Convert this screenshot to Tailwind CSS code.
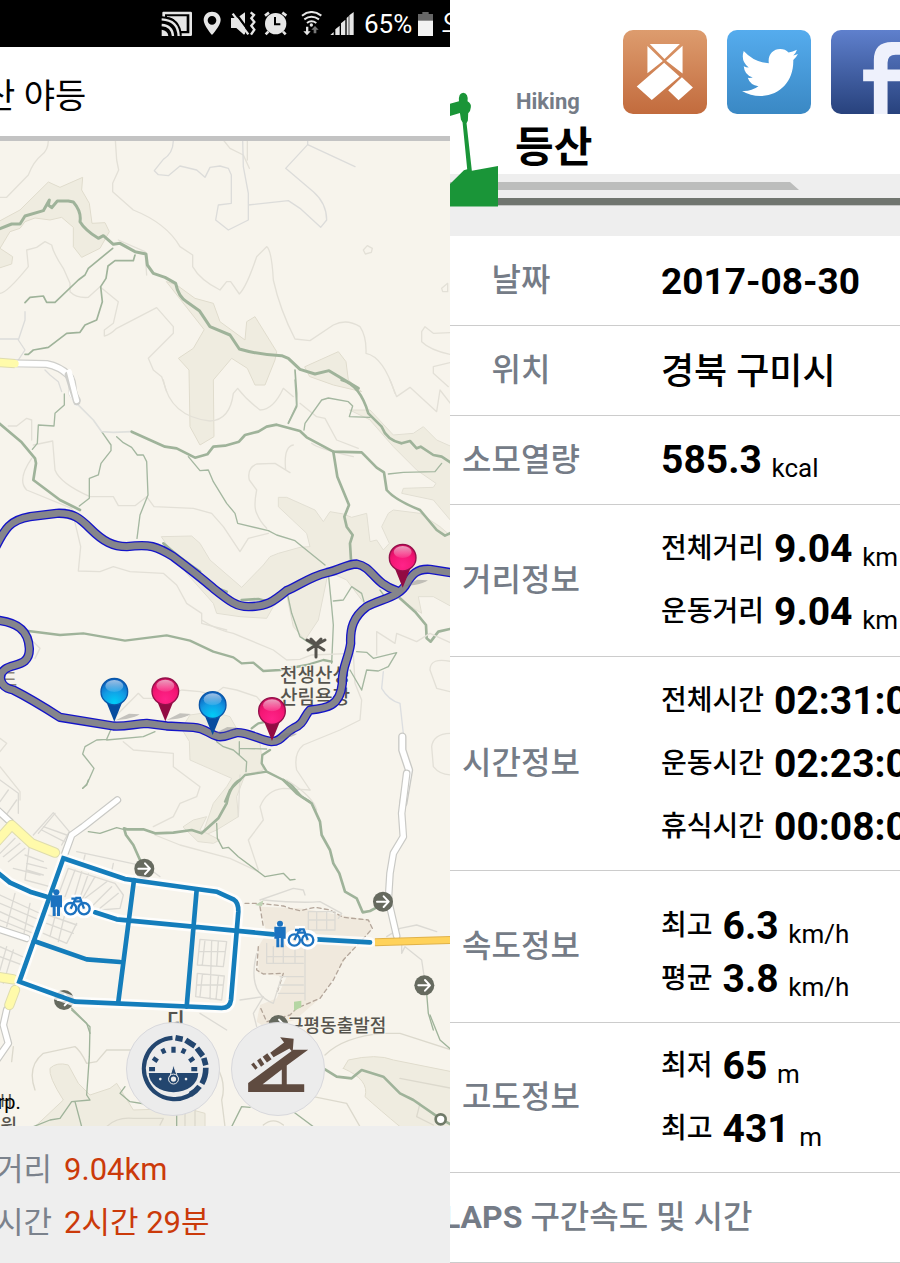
<!DOCTYPE html>
<html lang="ko">
<head>
    <meta charset="UTF-8">
    <meta name="viewport" content="width=device-width, initial-scale=1.0">
    <title>산 야등 - 등산 기록</title>
    <script src="https://cdn.jsdelivr.net/npm/@tailwindcss/browser@4"></script>
</head>
<body class="bg-white text-black font-[Roboto,'Noto_Sans_CJK_KR',sans-serif]">
<div class="grid grid-cols-2 min-h-screen">

    <!-- 지도 화면 -->
    <section class="flex flex-col overflow-hidden">
        <div class="flex items-center h-[47px] bg-black text-white pl-[161px] whitespace-nowrap overflow-hidden">
            <svg class="w-[194px] h-[26px] shrink-0" viewBox="484 32 582 78" fill="#e6e6e6">
                <!-- 캐스트 -->
                <path d="M488 50V37q0-3 3-3h82q4 0 4 4v65q0 4-4 4h-33v-8h29V42h-73v8z"/>
                <path d="M502 48h59v44h-21q-4-38-38-42z"/>
                <g fill="none" stroke="#000" stroke-width="19"><path d="M486 57q49 2 51 50"/></g>
                <g fill="none" stroke="#e6e6e6" stroke-width="7"><path d="M486 57q49 2 51 50M486 74q32 2 34 33"/></g>
                <path d="M486 88q18 2 20 19h-20z"/>
                <!-- 위치 -->
                <path fill-rule="evenodd" d="M637 34c-14 0-25 10-25 25 0 17 25 45 25 45s26-28 26-45c0-15-12-25-26-25zm0 13a13 13 0 1 1 0 26 13 13 0 0 1 0-26z"/>
                <!-- 무음 진동 -->
                <path d="M694 53h18l24-17v64l-3 3-23-20h-16z"/>
                <path d="M706 36l46 62" stroke="#000" stroke-width="7"/>
                <path d="M699 40l47 62" stroke="#e6e6e6" stroke-width="7"/>
                <path d="M753 36l10 8-8 10 9 11-9 11 9 12-10 15" fill="none" stroke="#e6e6e6" stroke-width="7"/>
                <!-- 알람 -->
                <circle cx="828" cy="70" r="32"/>
                <path d="M796 46l12-9M860 46l-12-9M806 94l-8 8M850 94l8 8" stroke="#e6e6e6" stroke-width="8"/>
                <path d="M826 50v22h16" fill="none" stroke="#000" stroke-width="6"/>
                <!-- 와이파이 -->
                <g fill="none" stroke="#e6e6e6" stroke-width="6"><path d="M907 46q28-22 58 0M914 57q21-16 44 0M922 68q13-10 28 0"/></g>
                <circle cx="935" cy="74" r="5"/>
                <path d="M919 79h7v14h7l-11 12-11-12h8z"/>
                <path fill="#777" d="M942 99V88h-7l11-11 11 11h-7v11z"/>
                <!-- 신호 -->
                <path d="M992 104l10-9v9zM1007 87l13-11v28h-13zM1024 69l13-11v46h-13zM1041 53l6-6v57h-6zM1049 45l13-10v69h-13z"/>
            </svg>
            <span class="ml-[9px] text-[26px] leading-8">65%</span>
            <svg class="w-[15px] h-6 ml-[6px] shrink-0" viewBox="0 0 45 72"><path fill="#666" d="M13 0h19v6h13v22H0V6h13z"/><path fill="#f2f2f2" d="M0 26h45v46H0z"/></svg>
            <span class="ml-[8px] text-[26px] leading-8">오후</span>
        </div>

        <header class="flex items-center h-[94px] pt-2 bg-white border-b-[5px] border-[#c3c3c3] overflow-hidden">
            <h1 class="-ml-4 text-[34px] leading-10 whitespace-nowrap">산 야등</h1>
        </header>

        <div class="relative grow bg-[#f7f4ec] overflow-hidden">
            <svg class="w-full h-[985px]" viewBox="0 141 450 985" preserveAspectRatio="xMidYMin slice" fill="none" stroke-linejoin="round" stroke-linecap="round">
                <defs>
                    <radialGradient id="pinkBall" cx=".5" cy=".8" r=".8"><stop offset="0" stop-color="#ff2389"/><stop offset=".6" stop-color="#f41674"/><stop offset="1" stop-color="#c70c58"/></radialGradient>
                    <radialGradient id="blueBall" cx=".5" cy=".9" r=".85"><stop offset="0" stop-color="#00cdf7"/><stop offset=".55" stop-color="#139be4"/><stop offset="1" stop-color="#0a5fbd"/></radialGradient>
                    <linearGradient id="shine" x1="0" y1="0" x2="0" y2="1"><stop offset="0" stop-color="#fff" stop-opacity=".6"/><stop offset="1" stop-color="#fff" stop-opacity=".1"/></linearGradient>
                    <g id="pinPink">
                        <path d="M4-4l40-20 32 2q-10 8-40 14z" fill="#777" fill-opacity=".4"/>
                        <path d="M-26-64L0 0l26-64z" fill="#920b43"/>
                        <circle cy="-90" r="40" fill="url(#pinkBall)" stroke="#93104a" stroke-width="4"/>
                        <ellipse cy="-107" rx="27" ry="18" fill="url(#shine)"/>
                    </g>
                    <g id="pinBlue">
                        <path d="M4-4l40-20 32 2q-10 8-40 14z" fill="#777" fill-opacity=".4"/>
                        <path d="M-26-64L0 0l26-64z" fill="#064c9f"/>
                        <circle cy="-90" r="40" fill="url(#blueBall)" stroke="#0b57a8" stroke-width="4"/>
                        <ellipse cy="-107" rx="27" ry="18" fill="url(#shine)"/>
                    </g>
                    <g id="gate"><circle r="30" fill="#666a5f"/><path d="M-18 0h34M2-16l15 16L2 16" stroke="#fff" stroke-width="6"/></g>
                    <g id="bike" stroke-linejoin="miter" stroke-linecap="butt">
                        <g stroke="#fff" stroke-width="24" stroke-linejoin="round"><path d="M-15-30v62"/><circle cx="28" cy="17" r="18"/><circle cx="68" cy="17" r="18"/><path d="M30-12h30"/></g>
                        <circle cx="-15" cy="-31" r="9" fill="#1b72c0"/>
                        <path d="M-32-22h34v36h-6v26h-9V12h-4v28h-9V14h-6z" fill="#1b72c0"/>
                        <g stroke="#1b72c0" stroke-width="7"><circle cx="28" cy="18" r="17"/><circle cx="68" cy="18" r="17"/><path d="M28 18l14-28M38-4h22M68 18L56-14H42M30-12h18"/></g>
                    </g>
                </defs>

                <!-- 북쪽 능선 -->
                <g transform="translate(0 140) scale(.33333)">
                    <g fill="#efece0" stroke="#e0dccd" stroke-width="3">
                        <path d="M-5 245L60 210 145 126 180 142 248 112 245 150 268 190 276 250 315 248 328 275 300 325 245 352 220 320 220 262 185 232 150 240 105 234 75 245 60 265 30 275 0 325 38 350 35 372-5 385z"/>
                        <path d="M500 425L530 435 585 475 640 490 660 545 735 600 740 545 765 530 830 635 825 660 795 735 765 735 742 685 695 655 640 720 642 890 600 915 570 860 567 690 535 655 580 625 612 570z"/>
                        <path d="M915 680L1015 635 1038 665 1045 720 1085 755 1000 735 930 710z"/>
                    </g>
                    <g stroke="#e3e0d7" stroke-width="4">
                        <path d="M145 0Q145 30 125 45 100 65 85 105L20 172H0"/>
                        <path d="M346 0L350 60 356 90 338 130V155L400 210Q500 250 540 320L578 345V380Q600 420 660 450L680 425H692L718 462Q740 440 770 350L800 320Q815 330 820 420 840 510 885 597L930 602 1000 555Q1040 535 1080 560 1100 590 1098 640 1150 650 1185 760"/>
                        <path d="M0 460Q20 460 85 380L80 330 110 322 135 305 155 315Q160 340 190 385L210 430V455Q230 475 265 472L300 440 355 485 340 550 313 570V588Q330 585 350 565L470 503 520 560V580L445 655 460 690 485 710 500 755"/>
                        <path d="M1350 578L1300 580 1275 560 1265 575V605Q1290 630 1350 643M1350 668L1300 680V700L1345 740M1090 330l12-13 15 8-3 12-18 5zM1325 445l18-15v25h-15zM670 0l20 25 40 20 18 40M742 0v60M355 300l80 35 5 70"/>
                    </g>
                    <g stroke="#dcdcda" stroke-width="4">
                        <path d="M520 0Q520 40 490 58L463 92 475 104 505 107 540 78 590 90 615 112 630 82 660 78 685 85 694 105V190L655 195 647 240 685 270 745 240V160L730 80 728 0M745 195L865 182 900 205 962 262 980 240Q980 190 940 155L857 85 923 14V0M923 14L1065 80"/>
                        <path d="M75 515V540L55 600 75 630 55 660M0 597H55M135 690l15 15 25 20 10 30"/>
                    </g>
                    <path d="M35 670L140 672Q180 680 205 705 220 720 218 760L230 780" stroke="#cfcfcb" stroke-width="24"/>
                    <path d="M35 670L140 672Q180 680 205 705 220 720 215 760L230 790" stroke="#fff" stroke-width="17"/>
                    <path d="M-5 667L45 671" stroke="#dfdcae" stroke-width="28" stroke-linecap="butt"/><path d="M-5 667L45 671" stroke="#fffbaa" stroke-width="22"/>
                    <g stroke="#9fb39a" stroke-width="5">
                        <path d="M338 325L265 385 255 405 235 420 165 487H140L130 468 90 472 75 488"/>
                        <path d="M405 345L400 362 345 362 324 378 318 415 302 440 307 485 290 540 255 555 240 577 200 580 145 622 100 630 85 643H75"/>
                        <path d="M885 690L890 760 890 800 865 850"/>
                    </g>
                    <path d="M-5 268L35 252H60L75 228 130 212 148 180 145 195 155 203 172 183H205L220 186Q245 215 240 245 255 270 295 295L310 287 340 313 360 310 405 335 438 342 442 375 460 400 495 412 527 430Q535 470 560 485L598 512 630 560 690 585 718 627Q780 645 845 647L865 655 900 688 945 702 987 692 1075 745" stroke="#9fb39a" stroke-width="9"/>
                </g>

                <!-- 중앙 숲과 등산로 -->
                <g transform="translate(0 380) scale(.33333)">
                    <g fill="#efece0" stroke="#e2dfd3" stroke-width="3">
                        <path d="M485 470L575 468 600 490 630 540 725 622 790 555 810 530 835 520 900 502 930 500 920 460 835 380V352H860L945 390 970 425 990 395 1030 402 1055 412 1100 400 1110 485 1130 480 1150 510 1168 490 1145 440 1165 400 1180 390 1260 400 1320 440 1355 470V680L1300 650 1255 650 1265 700 1170 640 1100 680 1040 600 985 575 955 720 915 780 880 740 860 645 820 680 800 715 720 710 650 700 640 670 560 580z"/>
                        <path d="M1050 90L1110 90 1180 165 1240 160 1270 140 1310 180 1355 200V425L1300 360 1205 340 1210 325 1300 322 1308 310 1250 270 1180 200 1110 120z"/>
                    </g>
                    <g stroke="#e3e0d7" stroke-width="4">
                        <path d="M490 0Q510 110 630 123 690 120 700 40L713 25Q740 60 780 90 820 90 850 25L880 50"/>
                        <path d="M25 138H50L80 115 95 120V180M100 195L158 183 165 270Q180 310 270 350H340L355 377H405L440 350 462 380 580 385 635 400 670 440 720 515 745 475 805 460"/>
                        <path d="M95 235Q50 300 80 330L215 385 242 500 235 573 300 575 340 560 390 575 490 580 530 615 560 670 605 700V730L680 750"/>
                        <path d="M880 195Q850 200 857 270L870 278 825 250 770 252Q740 265 748 300L770 330Q760 380 770 400 780 425 800 445M900 70L950 110 975 115 1010 180 1075 205M935 190Q950 205 1060 230M1170 0L1190 50 1230 22 1310 95 1320 30 1355 75"/>
                    </g>
                    <g stroke="#a4b7a0" stroke-width="4">
                        <path d="M193 42L193 75 165 100 162 138 115 135 112 190 97 208"/>
                        <path d="M305 155L333 195V212L303 250 295 285 268 295V355L238 378"/>
                        <path d="M350 170L370 188 395 202 412 225H430L440 245 444 345 420 405 411 475"/>
                        <path d="M565 230L600 272 625 270 640 305 680 370 705 400 713 430 805 452 830 465 885 482 975 555"/>
                        <path d="M885 0L890 75 865 128M912 150L915 130 965 60 985 54 1045 65 1058 78 1048 110 1110 112M1165 282L1210 277 1305 275 1325 250"/>
                        <path d="M985 580L995 680 1000 735 995 850M1000 663L1030 660 1055 620 1085 640 1092 665M862 640L875 700 900 770 945 800M1140 630L1165 665"/>
                    </g>
                    <path d="M230 70L280 120 305 155 340 157 395 155" stroke="#dfe0dd" stroke-width="5"/>
                    <path d="M205-15L230 65" stroke="#cfcfcb" stroke-width="22"/><path d="M208-25L230 62" stroke="#fff" stroke-width="15"/>
                    <g stroke="#9fb39a" stroke-width="8">
                        <path d="M-5 128L65 187 105 235 108 250 100 300 180 360 240 390"/>
                        <path d="M395 155L495 200 530 205 585 233 622 223 640 200 675 197 717 185 735 165 775 155 800 140 830 134 900 153 920 172 1000 215 1085 217 1130 263 1152 277 1160 330Q1185 360 1260 390L1310 450 1335 467 1355 457"/>
                        <path d="M1000 215L1012 290 1047 375 1033 410 1040 440 1058 465 1050 490 1053 540"/>
                        <path d="M1025 0Q1080 15 1105 100L1145 140Q1160 180 1205 190L1230 183 1250 205 1262 200 1300 225 1325 230 1355 250"/>
                        <path d="M490 490Q540 535 600 575M640 620L680 635M725 660L775 657 805 665M1200 655L1245 695 1278 735 1280 775 1292 785 1315 755 1350 747"/>
                    </g>
                </g>

                <!-- 산림욕장 주변 -->
                <g transform="translate(0 600) scale(.33333)">
                    <g fill="#efece0" stroke="#e2dfd3" stroke-width="3">
                        <path d="M545 385L570 345 640 335 690 350 715 395 780 430 790 510 735 525 710 590 715 650 650 690 605 710 640 610 680 560 695 535 570 480 568 425z"/>
                        <path d="M550 680L580 660 620 650 600 690 660 720 640 730 595 725z"/>
                    </g>
                    <g stroke="#e3e0d7" stroke-width="4">
                        <path d="M345 350L415 280 430 295H480L545 270 600 275 640 285 670 262 710 270 770 290 800 325"/>
                        <path d="M370 425L400 450 520 460V500L600 560 590 590 540 610 520 650 460 680M605 60Q650 90 700 100L820 150 860 180 900 178 935 165 1060 160 1065 250 1085 300 1080 360 1020 390 910 435Q880 460 890 510L930 570"/>
                        <path d="M1185 130L1130 95V165M1190 100L1250 125 1290 100 1355 130M1185 130L1190 100M1355 185Q1290 170 1290 210L1310 265 1350 275M1355 400Q1300 400 1295 440L1300 500Q1320 525 1355 525M720 525L715 650M930 570L850 565Q800 570 780 620L790 660 745 720 775 810M0 415l20 15-20 25M0 500l60 75V600M100 125l20 20-15 30"/>
                        <path d="M1150 215L1145 265Q1165 300 1200 310L1210 400" stroke="#dcdee0"/>
                    </g>
                    <g stroke="#a4b7a0" stroke-width="4">
                        <path d="M333 388L320 418 290 420 255 440 248 462 282 505 262 550 248 565M320 420L430 410 465 395"/>
                        <path d="M650 425L670 440 700 450 718 465V425M700 450L740 485 738 515M718 445L800 447M1070 155L1100 157 1120 175 1190 158 1165 200 1135 213 1100 210 1085 270 1050 210"/>
                    </g>
                    <g stroke="#9fb39a" stroke-width="7">
                        <path d="M85 93L180 105 250 100 375 122 500 106 570 122 640 155 700 172 725 190 760 188 790 213 840 210 920 195 970 180 995 185"/>
                        <path d="M675 605L690 570 735 525 800 515 785 490 787 465 810 450M800 515L850 540 870 550 905 590 930 605M755 385L775 370 800 365"/>
                    </g>
                    <path d="M1207 410V450L1227 510 1210 610" stroke="#c9c9c5" stroke-width="25"/>
                    <path d="M1207 410V450L1227 510 1210 610" stroke="#fff" stroke-width="17"/>
                </g>

                <!-- 시가지 -->
                <g transform="translate(0 780) scale(.33333)">
                    <path d="M780 380L900 385 1110 420 1115 450 1040 530 965 650 885 720 800 745 770 725 780 675 830 655 860 590 775 580V500L800 460z" fill="#f0e9dd"/>
                    <path d="M735 370H780L850 378 870 385 900 392 945 382 990 390 1030 412 1105 420 1117 445 1100 465 1030 540 1000 600 960 655 890 685 870 705 800 725 780 680M780 380L790 440M775 500L770 570 790 582 850 580 830 640" stroke="#b4a69a" stroke-width="4" stroke-dasharray="12 10"/>
                    <path d="M882 665l22-3v20l-22 10z" fill="#b5d6a3"/><path d="M765 375l25-14-4 18z" fill="#c0d3b5"/>
                    <g stroke="#dcdad4" stroke-width="4">
                        <path d="M100 165L160 98 208 155 185 195M165 100l-50 60M130 140l70 25M125 150l68 35M0 0L55 40V100M25 30L0 65M50 60L15 110M75 225L130 245M90 180L75 300 150 320M0 220L45 175M10 230L60 190M25 245L75 205M40 265l80 20M80 250l60 15M80 270l50 15M0 345l130 60M0 370l130 55M45 340L20 440M90 370L70 470M0 395l110 50M0 420l100 40M0 500l90 40M0 530l80 30M20 500L0 570M40 510L10 610M130 460l70 30 30-60M145 405l85 30M140 430l80 30M170 390l-20 80M195 400l-20 85"/>
                        <path d="M205 265L345 310 370 345 360 385 300 390M205 265l-30 80M225 270l-30 80M245 275l-25 85M265 282l-30 85M285 290l-40 70M320 305L235 370M335 320L280 375M355 340l-55 45M230 215L440 260 480 290M255 225l-5 20M340 250l-5 25"/>
                        <path d="M600 478L680 485 670 560 592 555zM592 580L673 588 665 660 587 650zM615 480l-8 75M635 482l-5 175M655 484l-5 75M600 515h75M590 615h80M607 585l-7 65M655 590l-7 68"/>
                        <path d="M780 360L880 325 910 330 915 345M790 360Q900 370 960 365L1025 400 1015 415M925 395h80v55h-80zM925 420h80M950 395v55M980 395v55M1160 470L1200 445 1250 435 1310 455M1205 475V520L1215 500 1265 540 1280 640"/>
                        <path d="M800 490v60h110M820 500v50M850 500v50M885 500v50M800 530h110M915 490v170M840 590h70M840 615h70M835 640h80M770 520Q740 640 820 670L845 590M720 660L790 650 760 700 770 740M600 700L680 750M460 680"/>
                        <path d="M465 165L540 195 690 235 775 275M860 0Q940 50 950 90" stroke="#e3e0d7"/>
                    </g>
                    <g stroke="#c9c9c5" stroke-width="23"><path d="M195 220L215 165 250 140 352 60M-10 88L30 125M-10 445L80 475M1220-20L1205 100 1210 170 1180 220 1170 280 1165 360 1190 468M20 690L10 735 25 790-10 840"/></g>
                    <g stroke="#fff" stroke-width="16"><path d="M195 220L215 165 250 140 352 60M-10 88L30 125M-10 445L80 475M1220-20L1205 100 1210 170 1180 220 1170 280 1165 360 1190 468M20 690L10 735 25 790-10 840"/></g>
                    <g stroke="#dedcae" stroke-width="31"><path d="M-10 185L35 135 95 190 165 218M-10 590L40 598M45 630L28 675"/></g>
                    <g stroke="#fffaaa" stroke-width="25"><path d="M-10 185L35 135 95 190 165 218M-10 590L40 598M45 630L28 675"/></g>
                    <path d="M1125 487L1360 480" stroke="#e0b24a" stroke-width="24" stroke-linecap="butt"/><path d="M1125 487L1360 480" stroke="#ffd25a" stroke-width="18" stroke-linecap="butt"/>
                    <g stroke="#9fb39a" stroke-width="8">
                        <path d="M720 0Q690 15 680 70L655 115 605 160 575 150 520 158 465 160 430 148H380L372 145 378 165 400 195 420 240M850 0L890 40 935 70 960 125 965 165 990 210 1000 250 1018 280 1035 335 1070 355 1088 397 1110 393 1125 385"/>
                        <path d="M265 155L300 160 350 143 370 148M650 130L652 175 668 205 685 202 715 230 795 290 850 280 870 300 885 298M1280 640L1285 700 1300 750M215 685L260 730 270 760" stroke-width="4"/>
                        <path d="M265 0L260 15 248 25" stroke-width="4"/>
                    </g>
                    <use href="#gate" x="433" y="266"/><use href="#gate" x="1149" y="365"/><use href="#gate" x="1273" y="616"/><use href="#gate" x="192" y="660"/><use href="#gate" x="835" y="735"/>
                    <g stroke="#fff" stroke-opacity=".8" stroke-width="30">
                        <path d="M190 235L375 297 590 327 650 335 705 360Q718 370 715 400L693 660Q690 685 665 684L225 665 58 605z"/>
                        <path d="M-10 275L30 308 90 335 140 350M285 397L365 420 820 463M950 478L1110 487"/>
                    </g>
                    <g stroke="#147dbb" stroke-width="14">
                        <path d="M190 235L375 297 590 327 650 335 700 358Q716 368 715 395L693 660Q690 684 665 684L225 665 58 605z" stroke-linejoin="miter"/>
                        <path d="M-10 275L30 308 90 335 140 350M285 397L350 418 820 463M950 478L1110 487M402 300L355 665M590 330L560 680M102 483L260 538 360 546"/>
                    </g>
                    <use href="#bike" x="184" y="368"/><use href="#bike" x="855" y="462"/>
                </g>

                <!-- 남쪽 등고선 -->
                <g transform="translate(0 1000) scale(.33333)">
                    <g fill="#efece0" stroke="#e0dccd" stroke-width="3">
                        <path d="M105 380L190 300Q145 230 150 205 170 185 205 195L235 250 270 285 330 265 350 250 400 330 560 325 615 340V380z"/>
                        <path d="M1030 205L1045 180Q1130 160 1180 180L1355 215V380H1200Q1140 330 1095 290 1110 240 1030 205z"/>
                    </g>
                    <g stroke="#dcd9cd" stroke-width="4">
                        <path d="M105 270Q80 200 130 160L200 145 225 140Q240 150 260 190L290 185 320 150H400M320 380Q350 350 400 355H490L480 375M650 200Q680 250 665 300L675 380M975 165Q1030 110 1150 100H1200L1355 150M940 290L1040 310 1080 380M790 375Q820 350 850 375M1200 235L1355 265M1225 290L1260 310 1250 350 1300 375M555 380V320M585 380V315M40 140l-5 45"/>
                    </g>
                    <path d="M100 380L150 360 180 355 215 305 270 300 260 285 268 170 270 80 215 30M225 305L245 380M435 312L390 305 360 280 375 260M695 380L725 320 750 322M880 335L940 380M530 345V380M1290 45L1320 120 1355 150" stroke="#9fb39a" stroke-width="4"/>
                    <path d="M975 208L1010 230 1055 235 1085 210 1150 230 1200 280 1240 300 1320 355 1355 375" stroke="#9fb39a" stroke-width="8"/>
                    <circle cx="1322" cy="358" r="15" fill="#fff" stroke="#6f7a68" stroke-width="8"/>
                </g>

                <!-- 지명 -->
                <g fill="#56544e" stroke="#f7f4ec" stroke-width="2" class="font-['Noto_Sans_CJK_KR',sans-serif] [paint-order:stroke]">
                    <text x="280" y="682" font-size="19" font-weight="500">천생산성</text>
                    <text x="280" y="704" font-size="19" font-weight="500">산림욕장</text>
                    <text x="287" y="1032" font-size="18" font-weight="500">구평동출발점</text>
                    <text x="167" y="1027" font-size="19" font-weight="700">디</text>
                    <text x="-16" y="686" font-size="18" font-weight="500" fill="#8c857a">골드</text>
                    <text x="0" y="1107" font-size="17">H</text>
                    <text x="-16" y="1132" font-size="18" font-weight="500">공원</text>
                </g>
                <path d="M316 657V645M316 645L307 640M316 645L325 640M316 645L308 650M316 645L324 650M311 639L316 644 321 639" stroke="#56544e" stroke-width="3"/>
                <text x="-27" y="1109" font-size="20" fill="#000">Corp.</text>

                <!-- 이동 경로 -->
                <g id="route" transform="translate(0 600) scale(.33333)">
                    <g stroke="#1414c8" stroke-width="28">
                        <path id="north" d="M-15-155C15-215 30-240 90-250L170-260C220-262 240-245 270-215 310-175 340-160 380-160 450-168 470-162 520-130 560-100 600-70 640-35 690 5 710 20 745 20 800 20 820 5 860-28 900-45 930-70 980-82 1020-90 1040-108 1070-108 1120-98 1120-50 1190-28"/>
                        <path id="south" d="M1365-80L1290-92C1250-95 1235-75 1220-50 1200-10 1150-5 1100 20 1060 50 1050 85 1052 130 1045 180 1025 200 1027 250 1020 320 980 325 930 330 910 350 915 370 880 385 850 400 845 425 815 425 780 420 740 395 710 398 680 405 680 412 655 410 620 400 620 385 580 382L500 378 440 370C400 372 380 380 340 378L180 352C130 320 80 290 40 270-2 262-8 225 15 208 40 190 90 200 88 145 85 90 50 65-15 60"/>
                    </g>
                    <g stroke="#85858b" stroke-width="20"><use href="#north"/><use href="#south"/></g>
                    <use href="#pinBlue" x="343" y="365"/>
                    <use href="#pinPink" x="496" y="364"/>
                    <use href="#pinBlue" x="638" y="405"/>
                    <use href="#pinPink" x="816" y="423"/>
                    <use href="#pinPink" x="1208" y="-37"/>
                </g>
            </svg>

            <div class="absolute bottom-[10px] inset-x-0 flex justify-center gap-[11px]">
                <button type="button" aria-label="속도" class="size-[94px] rounded-full bg-[#ececec] border border-[#d8d8dc]">
                    <svg class="w-full h-full" viewBox="378 66 279 279" fill="none" stroke="#23466f">
                        <path d="M516 111A93 93 0 1 0 594 263" stroke-width="13"/>
                        <path d="M525 111l22 4M556 118l28 18M590 142l18 24M611 172l6 22M617 202q0 28-12 48M598 258q-12 16-28 25" stroke-width="17"/>
                        <path d="M519 138v18M485 144l7 14M553 144l-7 14M457 172l14 10M581 172l-14 10M445 206h18M573 206h18" stroke-width="13"/>
                        <path d="M444 218h150a75 58 0 0 1-150 0z" fill="#23466f" stroke="none"/>
                        <path d="M519 193l-13 42a14 14 0 0 0 27 0z" fill="#23466f" stroke="#ececec" stroke-width="3"/>
                        <circle cx="519" cy="236" r="15" fill="#23466f" stroke="#ececec" stroke-width="3"/>
                        <circle cx="519" cy="236" r="8" fill="#ececec" stroke="none"/>
                        <circle cx="479" cy="236" r="4" fill="#ececec" stroke="none"/><circle cx="557" cy="236" r="4" fill="#ececec" stroke="none"/>
                    </svg>
                </button>
                <button type="button" aria-label="고도" class="size-[94px] rounded-full bg-[#ececec] border border-[#d8d8dc]">
                    <svg class="w-full h-full" viewBox="692 66 279 279" fill="#5f4b40">
                        <path d="M741 275v-27l137-101h45L858 195v57h53v23zM785 252h58v-45z"/>
                        <path d="M838 109l41 5-3 41-10-12-48 27-10-14 42-31z"/>
                        <path d="M785 168l14-10 13 18-14 10zM768 180l10-8 12 19-10 8zM750 192l8-6 12 16-7 6z"/>
                    </svg>
                </button>
            </div>
        </div>

        <dl class="h-[137px] bg-[#eee] text-[31px] leading-[53px] pt-[17px] whitespace-nowrap">
            <div class="flex gap-3 -ml-[5px]"><dt class="text-[#7b828c]">거리</dt><dd class="text-[#cb3a0a]">9.04km</dd></div>
            <div class="flex gap-3 -ml-[5px]"><dt class="text-[#7b828c]">시간</dt><dd class="text-[#cb3a0a]">2시간 29분</dd></div>
        </dl>
    </section>

    <!-- 운동 기록 화면 -->
    <section class="overflow-hidden">
        <header class="relative">
            <div class="flex h-[174px] pl-[66px] gap-[30px] overflow-hidden">
                <div class="shrink-0 pt-[88px] w-[77px] whitespace-nowrap">
                    <p class="text-[22px] leading-7 font-bold text-[#757c87]">Hiking</p>
                    <h2 class="-ml-px text-[42px] leading-[64px] font-bold">등산</h2>
                </div>
                <div class="flex gap-5 pt-[30px] shrink-0">
                    <a href="#" aria-label="카카오스토리" class="size-[84px] rounded-[10px] overflow-hidden bg-linear-to-b from-[#dd9c6e] to-[#c26b3d]">
                        <svg viewBox="519 90 251 251" fill="#fff"><path d="M599 132h90l-46 45zM592 138l46 45-46 36zM697 137v83l-49-38zM560 259l82-71 46 41-83 70zM654 270l41-39 33 31-43 38z"/></svg>
                    </a>
                    <a href="#" aria-label="트위터" class="size-[84px] rounded-[10px] overflow-hidden bg-linear-to-b from-[#55acee] to-[#3a88c4]">
                        <svg viewBox="829 90 251 251" fill="#fff"><path d="M879 153q32 35 75 36c-4-24 12-42 34-42q15 0 25 10 12-2 25-8-3 10-11 17 8-1 14-4-5 10-14 18c2 62-40 107-98 107q-30 0-55-15 27 2 49-14-25-3-32-25 8 1 15-1-25-8-27-34 7 4 15 4-25-20-15-49z"/></svg>
                    </a>
                    <a href="#" aria-label="페이스북" class="size-[84px] rounded-[10px] overflow-hidden bg-linear-to-b from-[#5f80cd] to-[#28427d]">
                        <svg viewBox="1143 90 251 251" fill="#eef1fc"><path d="M1271 341v-98h-32v-35h32v-28q0-54 54-54h45v38h-34q-24 0-24 24v20h48l-6 35h-42v98z"/></svg>
                    </a>
                </div>
            </div>
            <div class="h-[62px] bg-[#eee] pt-2">
                <svg class="block w-[349px] h-2" viewBox="0 0 349 8" fill="#bcbdbc"><path d="M0 0h340l9 8H0z"/></svg>
                <div class="mt-2 h-2 bg-[#70756f] border-b border-[#c5c6c5]"></div>
            </div>
            <svg class="absolute left-0 bottom-[29px] w-12 h-[115px]" viewBox="0 276 145 345" fill="#1a9538">
                <path d="M0 310l27-7q-2-25 13-26 16 2 13 26 12 8 10 18-1 13-8 18l-1 22-4 8 16 144 79-15v123H0v-68l42-42 10-3-14-141-5-9-3-20-30 9z"/>
            </svg>
        </header>

        <table class="w-full table-fixed border-collapse whitespace-nowrap [&_tr]:border-b [&_tr]:border-[#ccc] [&_th]:p-0 [&_th]:pr-[69px] [&_th]:text-[32px] [&_th]:leading-10 [&_th]:font-medium [&_th]:text-[#757c87] [&_td]:p-0 [&_td]:pt-[2px] [&_td]:text-[39px] [&_b]:leading-none [&_b]:font-bold [&_small]:text-[26px] [&_small]:leading-none [&_small]:align-[-4px] [&_span]:mr-[10px] [&_span]:text-[28px] [&_span]:leading-none [&_span]:font-medium [&_span]:align-[4px]">
            <colgroup><col class="w-[211px]"><col></colgroup>
            <tbody>
                <tr class="h-[89px]"><th scope="row">날짜</th><td><b class="text-[37px]">2017-08-30</b></td></tr>
                <tr class="h-[90px]"><th scope="row">위치</th><td><strong class="text-[36px] font-medium">경북 구미시</strong></td></tr>
                <tr class="h-[89px]"><th scope="row">소모열량</th><td><b>585.3</b> <small>kcal</small></td></tr>
                <tr class="h-[152px]">
                    <th scope="row">거리정보</th>
                    <td>
                        <div class="leading-[63px]"><span>전체거리</span><b>9.04</b> <small>km</small></div>
                        <div class="leading-[63px]"><span>운동거리</span><b>9.04</b> <small>km</small></div>
                    </td>
                </tr>
                <tr class="h-[214px]">
                    <th scope="row">시간정보</th>
                    <td>
                        <div class="leading-[63px]"><span>전체시간</span><b>02:31:07</b></div>
                        <div class="leading-[63px]"><span>운동시간</span><b>02:23:02</b></div>
                        <div class="leading-[63px]"><span>휴식시간</span><b>00:08:05</b></div>
                    </td>
                </tr>
                <tr class="h-[152px]">
                    <th scope="row">속도정보</th>
                    <td class="pt-3.5!">
                        <div class="leading-[53px]"><span>최고</span><b>6.3</b> <small>km/h</small></div>
                        <div class="leading-[53px]"><span>평균</span><b>3.8</b> <small>km/h</small></div>
                    </td>
                </tr>
                <tr class="h-[150px]">
                    <th scope="row">고도정보</th>
                    <td>
                        <div class="leading-[63px]"><span>최저</span><b>65</b> <small>m</small></div>
                        <div class="leading-[63px]"><span>최고</span><b>431</b> <small>m</small></div>
                    </td>
                </tr>
                <tr class="h-[90px]"><th colspan="2" class="text-left"><div class="-ml-[7px]"><strong>LAPS</strong> 구간속도 및 시간</div></th></tr>
            </tbody>
        </table>
    </section>
</div>
</body>
</html>
